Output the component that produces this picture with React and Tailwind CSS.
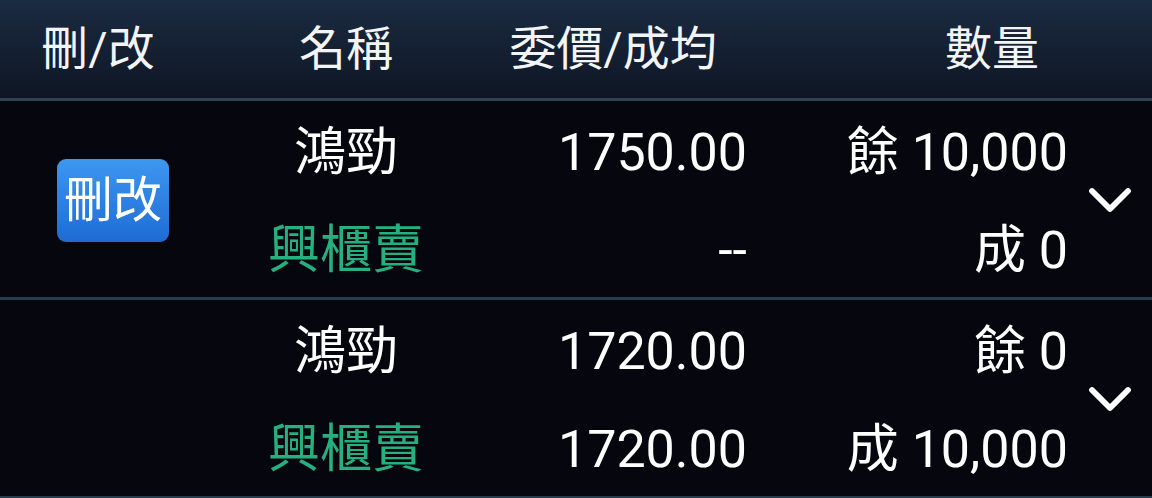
import React from "react";

const font = { fontFamily: 'Roboto, "Noto Sans CJK TC", "Noto Sans", sans-serif' };

function Chevron() {
  return (
    <svg width="46" height="32" viewBox="0 0 46 32" fill="none">
      <path d="M5 6 L23 24 L41 6" stroke="#ffffff" strokeWidth="5.8" strokeLinecap="round" strokeLinejoin="round" />
    </svg>
  );
}

function Row({ button, price1, price2, qty1, qty2 }) {
  return (
    <div className="grid grid-cols-[196px_300px_254px_320px_82px] h-[199px] border-b-[3px] border-[#293a4b] bg-[#06070e] text-[52px] text-white leading-[98px] pt-[3px]">
      <div className="flex items-center pl-[57px] -mt-[3px]">
        {button && (
          <div className="w-[112px] h-[83px] rounded-[9px] bg-gradient-to-b from-[#3e97f0] to-[#1d6cd4] flex items-center justify-center text-[49px] leading-none text-white">
            刪改
          </div>
        )}
      </div>
      <div className="flex flex-col items-center">
        <div className="h-[98px]">鴻勁</div>
        <div className="h-[98px] text-[#27b07f]">興櫃賣</div>
      </div>
      <div className="flex flex-col items-end pr-[3px]">
        <div className="h-[98px]">{price1}</div>
        <div className="h-[98px]">{price2}</div>
      </div>
      <div className="flex flex-col items-end pr-[2px]">
        <div className="h-[98px]">{qty1}</div>
        <div className="h-[98px]">{qty2}</div>
      </div>
      <div className="flex items-center justify-center -mt-[3px] pr-[2px]">
        <Chevron />
      </div>
    </div>
  );
}

export default function App() {
  return (
    <div className="w-[1152px] h-[498px] overflow-hidden bg-[#06070e]" style={font}>
      <div className="grid grid-cols-[196px_300px_234px_102px_320px] h-[101px] border-b-[3px] border-[#2d4454] bg-gradient-to-b from-[#1b2b42] to-[#0e1624] text-[47px] text-[#f2f4f6] items-center">
        <div className="text-center">刪/改</div>
        <div className="text-center">名稱</div>
        <div className="text-center">委價/成均</div>
        <div />
        <div className="text-center">數量</div>
      </div>
      <Row button price1="1750.00" price2="--" qty1="餘 10,000" qty2="成 0" />
      <Row price1="1720.00" price2="1720.00" qty1="餘 0" qty2="成 10,000" />
    </div>
  );
}
